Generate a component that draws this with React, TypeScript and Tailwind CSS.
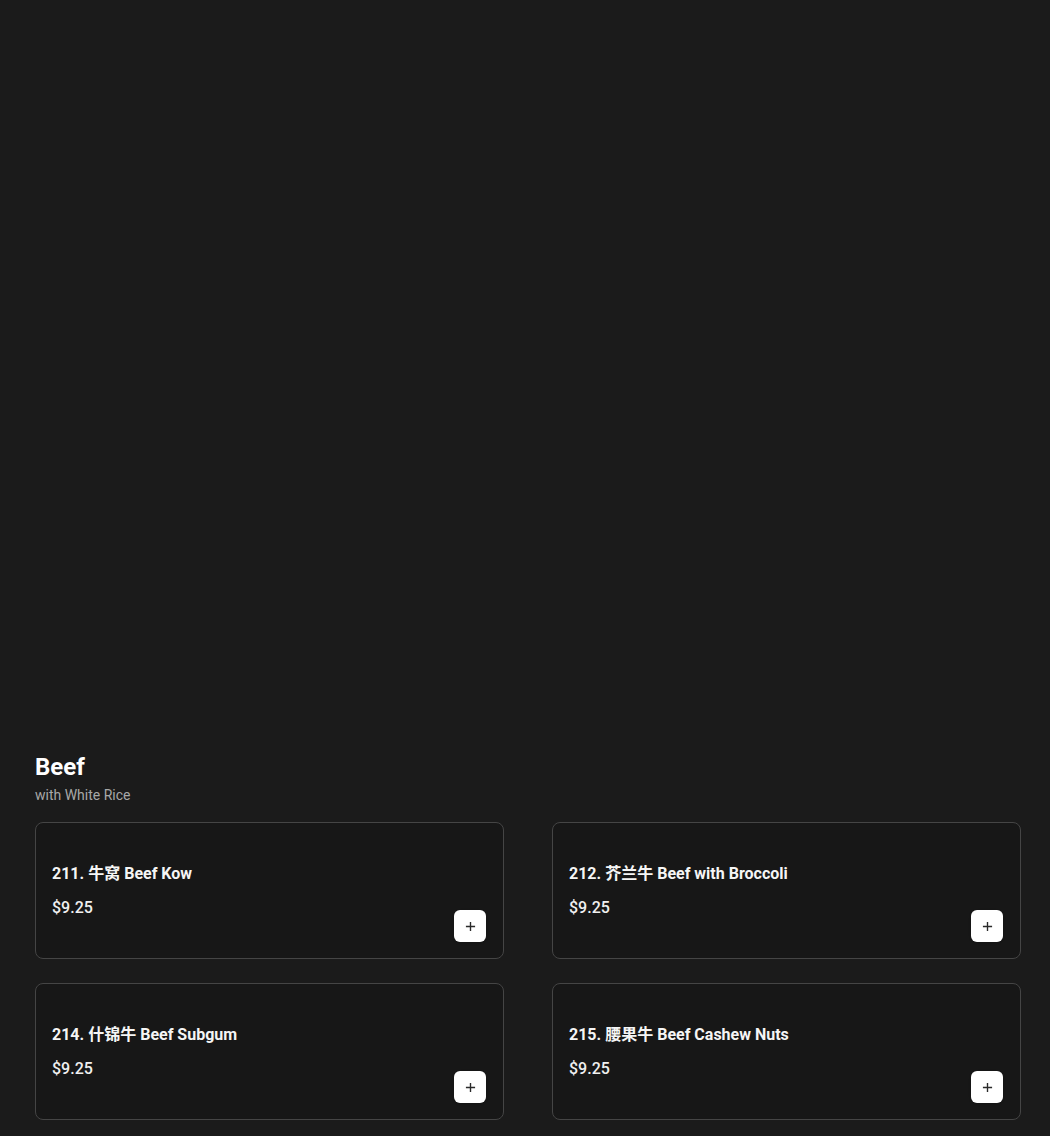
import React from 'react';

const items = [
  { no: '211.', zh: '牛窝', en: 'Beef Kow', price: '$9.25' },
  { no: '212.', zh: '芥兰牛', en: 'Beef with Broccoli', price: '$9.25' },
  { no: '214.', zh: '什锦牛', en: 'Beef Subgum', price: '$9.25' },
  { no: '215.', zh: '腰果牛', en: 'Beef Cashew Nuts', price: '$9.25' },
];

const App = () => {
  return (
    <div
      className="min-h-[1136px] bg-[#1b1b1b] pl-[35px] pr-[29px] pt-[750px] pb-4 text-white"
      style={{ fontFamily: 'Roboto, "Noto Sans CJK SC", sans-serif' }}
    >
      <h2 className="text-[24px] font-bold leading-[34px]">Beef</h2>
      <p className="text-[14px] leading-[20px] text-[#a8a8a8] mt-[1px]">with White Rice</p>

      <div className="grid grid-cols-[469px_469px] gap-x-[48px] gap-y-[24px] mt-[17px]">
        {items.map((item) => (
          <div
            key={item.no}
            className="relative h-[137px] rounded-[8px] border border-[#454545] bg-[#171717] px-[16px] pt-[40px]"
          >
            <div className="text-[16px] font-bold leading-[22px] text-[#f5f5f5]">
              {item.no} {item.zh} {item.en}
            </div>
            <div className="mt-[12px] text-[16px] font-medium leading-[22px] text-[#f0f0f0]">
              {item.price}
            </div>
            <button className="absolute right-[17px] bottom-[16px] flex h-[32px] w-[32px] items-center justify-center rounded-[6px] bg-white shadow-sm">
              <svg width="11" height="11" viewBox="0 0 12 12" fill="none" stroke="#2a2a2a" strokeWidth="1.5">
                <path d="M6 1v10M1 6h10" />
              </svg>
            </button>
          </div>
        ))}
      </div>
    </div>
  );
};

export default App;
